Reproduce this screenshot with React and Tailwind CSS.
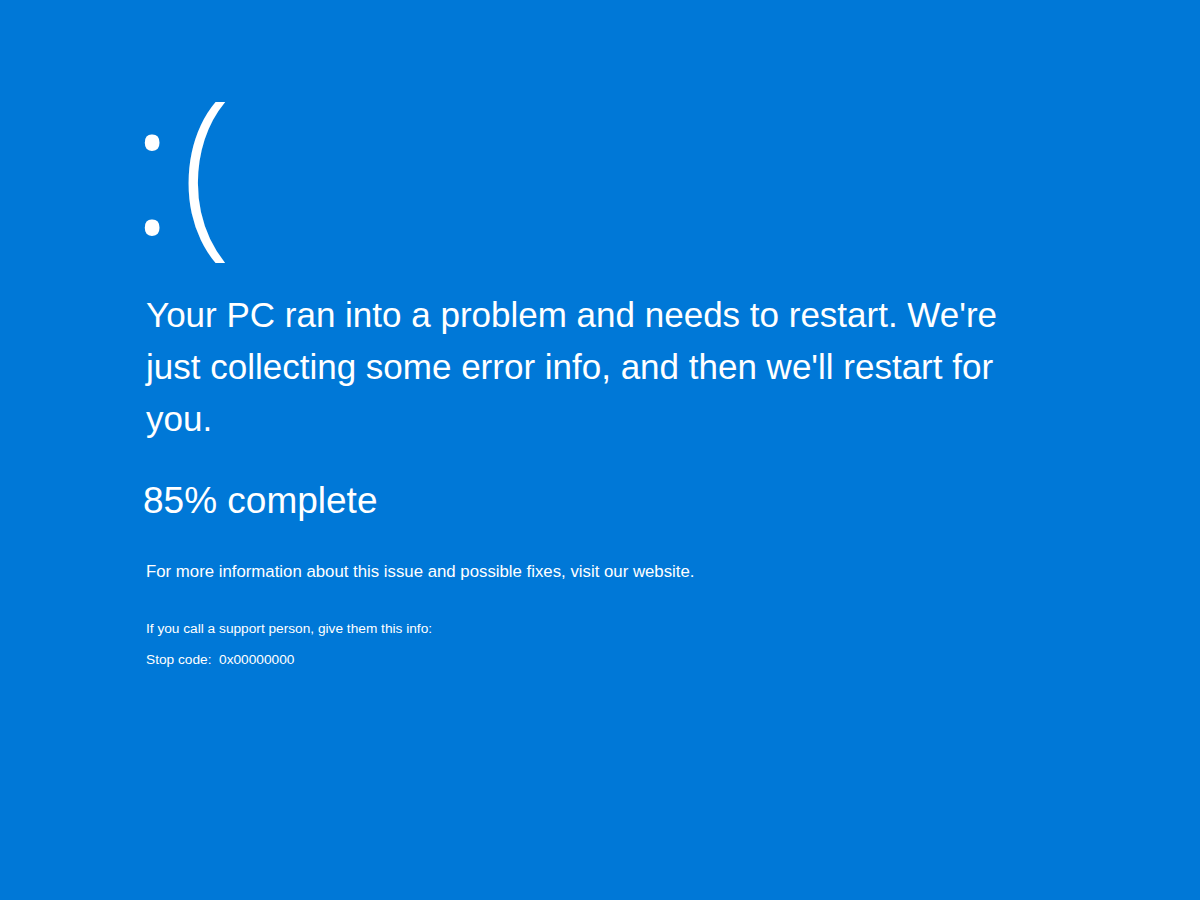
export default function App() {
  return (
    <div className="w-[1200px] h-[900px] bg-[#0078d7] text-white overflow-hidden" style={{ fontFamily: '"Liberation Sans", Arial, sans-serif' }}>
      <div className="pl-[146px] pt-[67px] flex flex-col">
        <div className="ml-[-16px] h-[190px] text-[185px] leading-[190px] font-light tracking-[7px]" style={{ fontFamily: '"Open Sans", sans-serif' }}>:(</div>
        <p className="mt-[32px] w-[880px] text-[35px] leading-[52px]">
          Your PC ran into a problem and needs to restart. We're just collecting some error info, and then we'll restart for you.
        </p>
        <p className="mt-[34px] ml-[-3px] text-[37px] leading-[44px]">85% complete</p>
        <p className="mt-[39px] text-[16.8px] leading-[20px]">For more information about this issue and possible fixes, visit our website.</p>
        <p className="mt-[38px] text-[13.7px] leading-[18px]">If you call a support person, give them this info:</p>
        <p className="mt-[13px] text-[13.7px] leading-[18px]">Stop code:&nbsp; 0x00000000</p>
      </div>
    </div>
  );
}
